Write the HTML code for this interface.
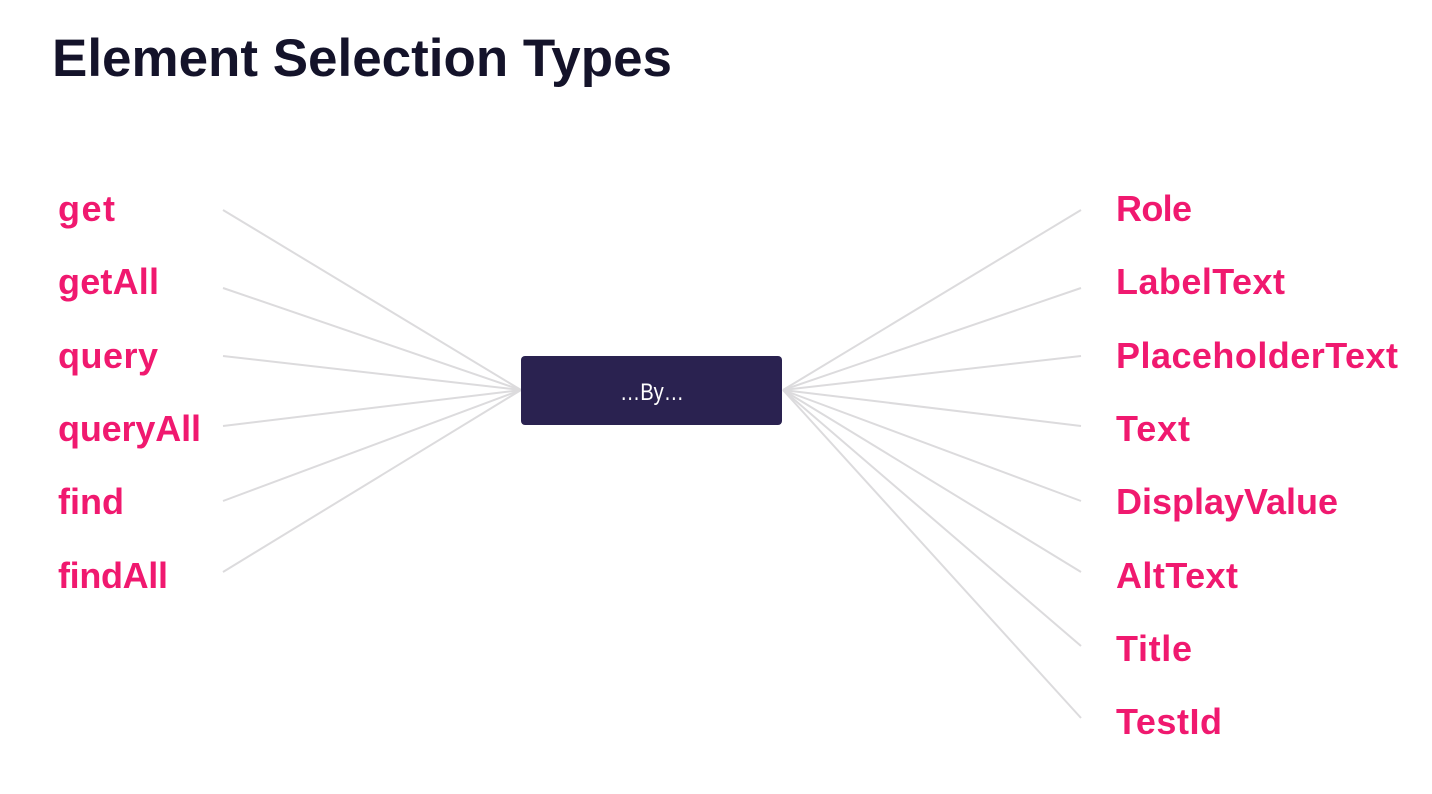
<!DOCTYPE html>
<html><head><meta charset="utf-8"><style>
html,body{margin:0;padding:0;background:#fff;width:1432px;height:794px;overflow:hidden}
svg{display:block}
</style></head><body>
<svg width="1432" height="794" viewBox="0 0 1432 794" xmlns="http://www.w3.org/2000/svg">
<text x="52" y="76" font-family="Liberation Sans, sans-serif" font-weight="bold" font-size="53" fill="#14132a" textLength="620" lengthAdjust="spacingAndGlyphs">Element Selection Types</text>
<g stroke="#dcdbdd" stroke-width="2" fill="none">
<line x1="223" y1="210" x2="521" y2="390"/>
<line x1="223" y1="288" x2="521" y2="390"/>
<line x1="223" y1="356" x2="521" y2="390"/>
<line x1="223" y1="426" x2="521" y2="390"/>
<line x1="223" y1="501" x2="521" y2="390"/>
<line x1="223" y1="572" x2="521" y2="390"/>
<line x1="1081" y1="210" x2="783" y2="390"/>
<line x1="1081" y1="288" x2="783" y2="390"/>
<line x1="1081" y1="356" x2="783" y2="390"/>
<line x1="1081" y1="426" x2="783" y2="390"/>
<line x1="1081" y1="501" x2="783" y2="390"/>
<line x1="1081" y1="572" x2="783" y2="390"/>
<line x1="1081" y1="646" x2="783" y2="390"/>
<line x1="1081" y1="718" x2="783" y2="390"/>
</g>
<rect x="521" y="356" width="261" height="69" rx="4" fill="#2a2250"/>
<text x="620" y="400" font-family="Liberation Sans, sans-serif" font-size="24" fill="#fff" textLength="64" lengthAdjust="spacingAndGlyphs">…By…</text>
<g font-family="Liberation Sans, sans-serif" font-weight="bold" font-size="36" fill="#f0196f" lengthAdjust="spacingAndGlyphs">
<text x="58" y="221" textLength="57">get</text>
<text x="58" y="294" textLength="101">getAll</text>
<text x="58" y="368" textLength="100">query</text>
<text x="58" y="441" textLength="143">queryAll</text>
<text x="58" y="514" textLength="66">find</text>
<text x="58" y="588" textLength="110">findAll</text>
<text x="1116" y="221" textLength="76">Role</text>
<text x="1116" y="294" textLength="169">LabelText</text>
<text x="1116" y="368" textLength="282">PlaceholderText</text>
<text x="1116" y="441" textLength="74">Text</text>
<text x="1116" y="514" textLength="222">DisplayValue</text>
<text x="1116" y="588" textLength="122">AltText</text>
<text x="1116" y="661" textLength="76">Title</text>
<text x="1116" y="734" textLength="106">TestId</text>
</g>
</svg>
</body></html>
